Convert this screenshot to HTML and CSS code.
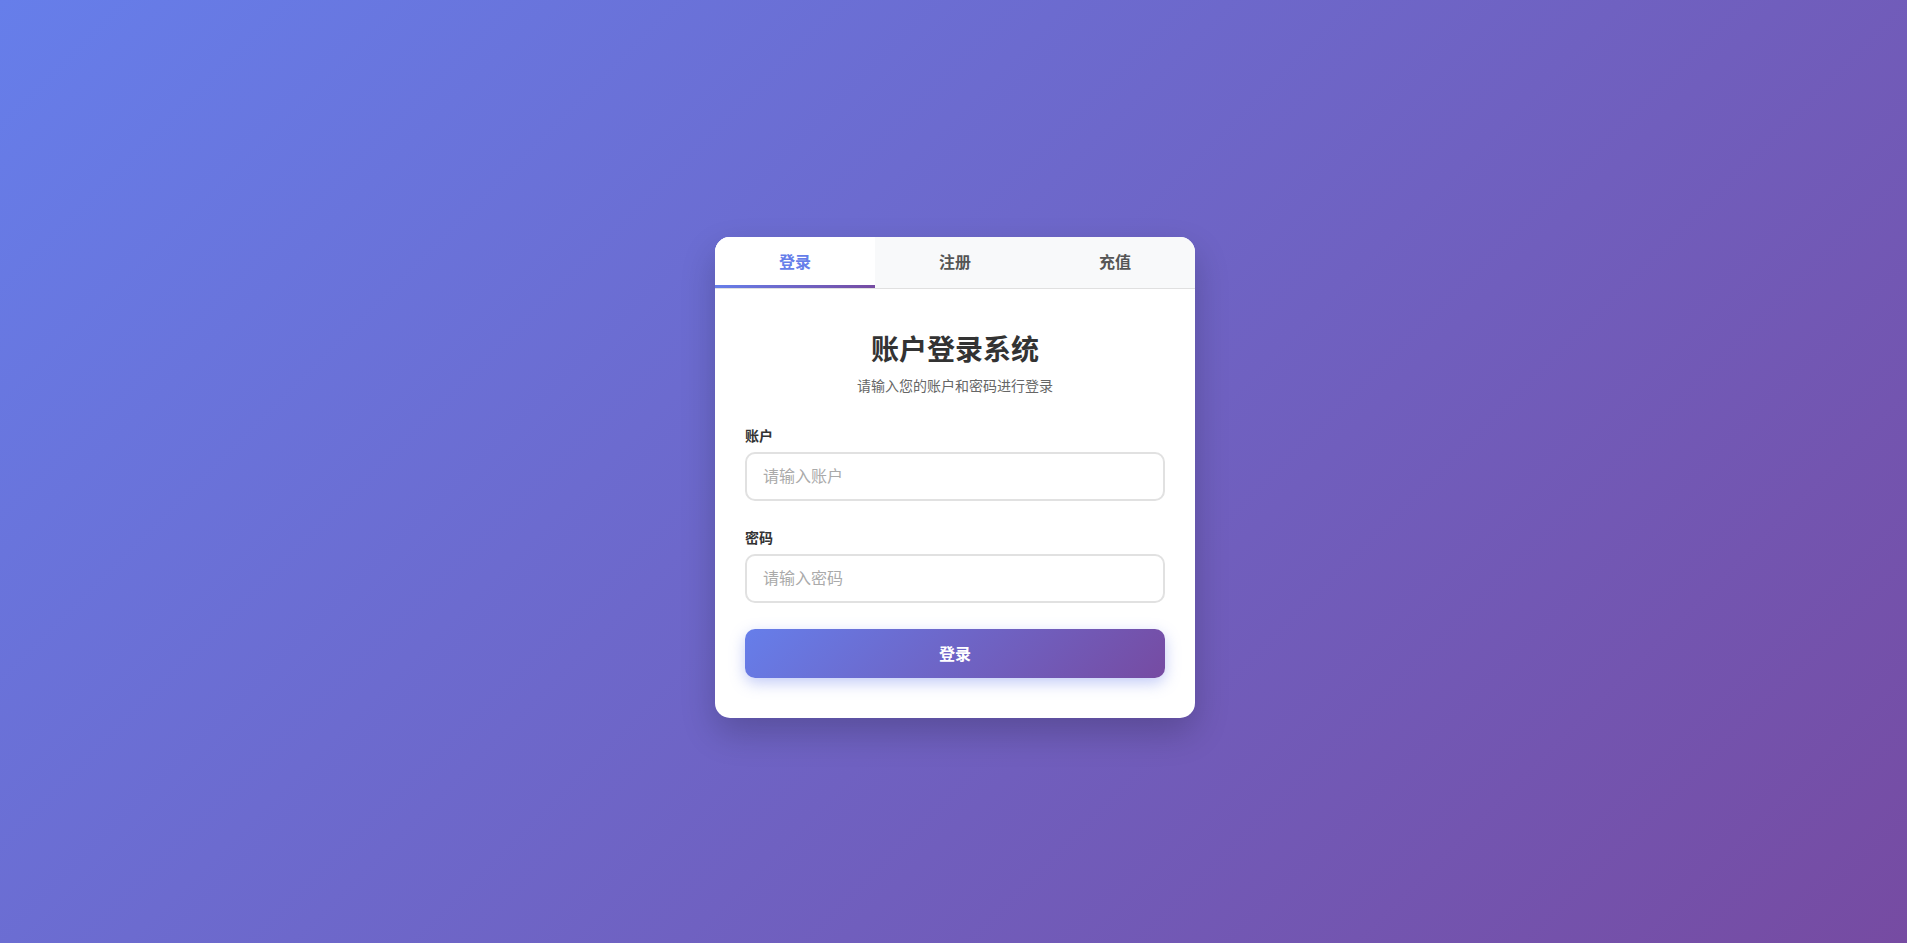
FILE: index.html
```html
<!DOCTYPE html>
<html lang="zh-CN">
<head>
<meta charset="UTF-8">
<title>账户登录系统</title>
<link rel="stylesheet" href="styles.css">
</head>
<body>
<div class="card">
  <div class="tabs">
    <div class="tab active">登录</div>
    <div class="tab">注册</div>
    <div class="tab">充值</div>
  </div>
  <div class="content">
    <h1 class="title">账户登录系统</h1>
    <p class="subtitle">请输入您的账户和密码进行登录</p>
    <div class="group">
      <label class="label">账户</label>
      <input class="input" type="text" placeholder="请输入账户">
    </div>
    <div class="group">
      <label class="label">密码</label>
      <input class="input" type="password" placeholder="请输入密码">
    </div>
    <button class="btn">登录</button>
  </div>
</div>
</body>
</html>
```
FILE: styles.css
```css
* { box-sizing: border-box; }
html, body { margin: 0; padding: 0; }
body {
  min-height: 100vh;
  padding: 12px 0 0 3px;
  background: linear-gradient(135deg, #667eea 0%, #764ba2 100%);
  font-family: "Noto Sans CJK SC", "Noto Sans", sans-serif;
  display: flex;
  align-items: center;
  justify-content: center;
}
.card {
  width: 480px;
  background: #fff;
  border-radius: 15px;
  overflow: hidden;
  box-shadow: 0 15px 35px rgba(0, 0, 0, 0.2);
}
.tabs {
  display: flex;
  background: #f8f9fa;
  border-bottom: 1px solid #e0e0e0;
}
.tab {
  flex: 1;
  height: 51px;
  line-height: 48px;
  text-align: center;
  font-size: 16px;
  font-weight: 600;
  color: #555;
  position: relative;
}
.tab.active {
  background: #fff;
  color: #667eea;
}
.tab.active::after {
  content: "";
  position: absolute;
  left: 0;
  right: 0;
  bottom: 0;
  height: 3px;
  background: linear-gradient(90deg, #667eea, #764ba2);
}
.content {
  padding: 38px 30px 40px;
}
.title {
  margin: 0;
  font-size: 28px;
  line-height: 42px;
  font-weight: 700;
  color: #333;
  text-align: center;
}
.subtitle {
  margin: 6px 0 29px;
  font-size: 14px;
  line-height: 21px;
  color: #666;
  text-align: center;
}
.group {
  margin-bottom: 26px;
}
.label {
  display: block;
  font-size: 14px;
  line-height: 20px;
  font-weight: 600;
  color: #333;
  margin-bottom: 7px;
}
.input {
  display: block;
  width: 100%;
  height: 49px;
  padding: 0 16px 3px;
  border: 2px solid #e1e1e1;
  border-radius: 10px;
  font-family: inherit;
  font-size: 16px;
  color: #333;
  outline: none;
  background: #fff;
}
.input::placeholder { color: #aaa; }
.btn {
  display: block;
  width: 100%;
  height: 49px;
  padding: 0 0 2px;
  border: none;
  border-radius: 10px;
  background: linear-gradient(135deg, #667eea 0%, #764ba2 100%);
  color: #fff;
  font-family: inherit;
  font-size: 16px;
  font-weight: 600;
  box-shadow: 0 5px 15px rgba(102, 126, 234, 0.4);
  cursor: pointer;
}
```
